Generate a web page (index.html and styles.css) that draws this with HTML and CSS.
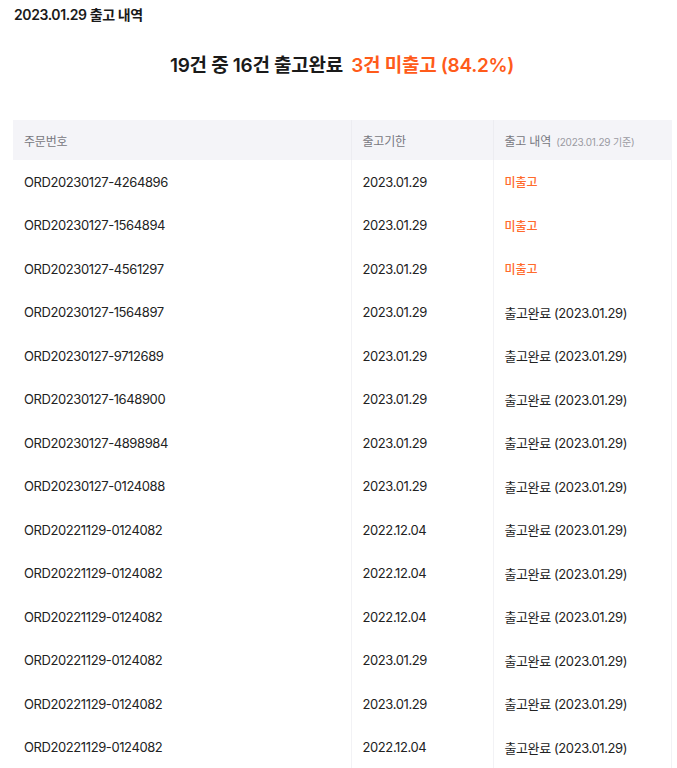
FILE: index.html
```html
<!DOCTYPE html>
<html lang="ko">
<head>
<meta charset="utf-8">
<link rel="stylesheet" href="styles.css">
</head>
<body>
<div class="page">
  <h1 class="title">2023.01.29 출고 내역</h1>
  <p class="summary">19건 중 16건 출고완료 <span class="warn">3건 미출고 (84.2%)</span></p>
  <table class="list">
    <thead>
      <tr>
        <th class="c1">주문번호</th>
        <th class="c2">출고기한</th>
        <th class="c3">출고 내역 <span class="sub">(2023.01.29 기준)</span></th>
      </tr>
    </thead>
    <tbody>
      <tr><td>ORD20230127-4264896</td><td>2023.01.29</td><td class="pending">미출고</td></tr>
      <tr><td>ORD20230127-1564894</td><td>2023.01.29</td><td class="pending">미출고</td></tr>
      <tr><td>ORD20230127-4561297</td><td>2023.01.29</td><td class="pending">미출고</td></tr>
      <tr><td>ORD20230127-1564897</td><td>2023.01.29</td><td>출고완료 (2023.01.29)</td></tr>
      <tr><td>ORD20230127-9712689</td><td>2023.01.29</td><td>출고완료 (2023.01.29)</td></tr>
      <tr><td>ORD20230127-1648900</td><td>2023.01.29</td><td>출고완료 (2023.01.29)</td></tr>
      <tr><td>ORD20230127-4898984</td><td>2023.01.29</td><td>출고완료 (2023.01.29)</td></tr>
      <tr><td>ORD20230127-0124088</td><td>2023.01.29</td><td>출고완료 (2023.01.29)</td></tr>
      <tr><td>ORD20221129-0124082</td><td>2022.12.04</td><td>출고완료 (2023.01.29)</td></tr>
      <tr><td>ORD20221129-0124082</td><td>2022.12.04</td><td>출고완료 (2023.01.29)</td></tr>
      <tr><td>ORD20221129-0124082</td><td>2022.12.04</td><td>출고완료 (2023.01.29)</td></tr>
      <tr><td>ORD20221129-0124082</td><td>2023.01.29</td><td>출고완료 (2023.01.29)</td></tr>
      <tr><td>ORD20221129-0124082</td><td>2023.01.29</td><td>출고완료 (2023.01.29)</td></tr>
      <tr><td>ORD20221129-0124082</td><td>2022.12.04</td><td>출고완료 (2023.01.29)</td></tr>
    </tbody>
  </table>
</div>
</body>
</html>
```
FILE: styles.css
```css
html, body {
  margin: 0;
  padding: 0;
  background: #ffffff;
}
body {
  font-family: Inter, "Noto Sans CJK KR", sans-serif;
  color: #1f1f1f;
}
.page {
  padding: 5px 6px 0 13px;
}
.title {
  margin: 0 0 0 1px;
  font-size: 14px;
  line-height: 20px;
  font-weight: 600;
  color: #1a1a1a;
  letter-spacing: -0.4px;
}
.summary {
  margin: 28px 0 0 0;
  text-align: center;
  font-size: 19px;
  line-height: 26px;
  font-weight: 600;
  color: #1a1a1a;
  letter-spacing: -0.3px;
}
.warn {
  color: #ff5b1a;
  margin-left: 4px;
}
.list {
  margin-top: 41px;
  width: 658px;
  border-collapse: collapse;
  table-layout: fixed;
  font-size: 13px;
}
.list th, .list td {
  box-sizing: border-box;
}
.c1 { width: 338px; }
.c2 { width: 142px; }
.c3 { width: 178px; }
.list th {
  height: 40px;
  padding: 0 0 0 11px;
  background: #f4f4f8;
  text-align: left;
  font-weight: 400;
  font-size: 12px;
  color: #777780;
  border-right: 1px solid #ececf1;
  letter-spacing: -0.2px;
}
.list th:last-child {
  border-right: 1px solid #f4f4f8;
}
.sub {
  font-size: 10px;
  color: #9a9aa2;
  margin-left: 2px;
}
.list td {
  height: 43.5px;
  padding: 0 0 0 11px;
  color: #222222;
  border-right: 1px solid #f2f2f5;
  letter-spacing: -0.4px;
}
.list td.pending {
  color: #ff6a2c;
  font-weight: 500;
  font-size: 12px;
  letter-spacing: -0.1px;
}
```
